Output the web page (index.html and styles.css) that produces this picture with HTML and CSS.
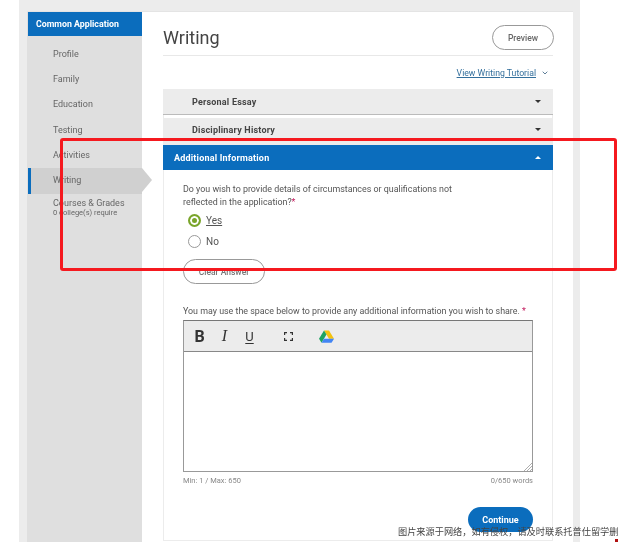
FILE: index.html
```html
<!DOCTYPE html>
<html lang="en">
<head>
<meta charset="utf-8">
<title>Writing</title>
<link rel="stylesheet" href="styles.css">
</head>
<body>
<div class="shell">
  <div class="page">
    <nav class="sidebar">
      <div class="side-head">Common Application</div>
      <ul class="side-list">
        <li class="side-item">Profile</li>
        <li class="side-item">Family</li>
        <li class="side-item">Education</li>
        <li class="side-item">Testing</li>
        <li class="side-item">Activities</li>
        <li class="side-item active">Writing</li>
        <li class="side-item multi">Courses &amp; Grades<small>0 college(s) require</small></li>
      </ul>
    </nav>
    <main class="main">
      <header class="title-row">
        <h1>Writing</h1>
        <button class="pill preview">Preview</button>
      </header>
      <div class="tutorial"><a>View Writing Tutorial</a><svg width="6" height="4" viewBox="0 0 6 4"><path d="M.7.7 3 3l2.3-2.3" fill="none" stroke="#5f7f99" stroke-width="1"/></svg></div>
      <section class="panel">
        <div class="acc first"><span>Personal Essay</span><i class="caret down"></i></div>
        <div class="acc second"><span>Disciplinary History</span><i class="caret down"></i></div>
        <div class="acc open"><span>Additional Information</span><i class="caret up"></i></div>
        <div class="panel-body">
          <p class="question">Do you wish to provide details of circumstances or qualifications not<br>reflected in the application?<b>*</b></p>
          <div class="radio-row yes"><span class="radio on"></span><span class="radio-label underlined">Yes</span></div>
          <div class="radio-row"><span class="radio"></span><span class="radio-label">No</span></div>
          <button class="pill clear">Clear Answer</button>
          <p class="prompt">You may use the space below to provide any additional information you wish to share. <b>*</b></p>
          <div class="editor">
            <div class="toolbar">
              <span class="tool bold">B</span>
              <span class="tool italic">I</span>
              <span class="tool under">U</span>
              <svg class="full" width="9" height="9" viewBox="0 0 9 9"><path d="M.6 3V.6H3M6 .6h2.400V3M8.400 6v2.400H6M3 8.400H.6V6" fill="none" stroke="#333" stroke-width="1.2"/></svg>
              <svg class="drive" width="15" height="13" viewBox="0 0 15 13"><path d="M5 .5h5l5 8.200h-5z" fill="#f4c20d"/><path d="M5 .5 0 8.800l2.500 4L7.500 4.600z" fill="#1ea362"/><path d="M5 8.700h10l-2.500 4H2.500z" fill="#4285f4"/></svg>
            </div>
            <div class="edit-area">
              <svg class="grip" width="8" height="8" viewBox="0 0 8 8"><path d="M8 0 0 8M8 3 3 8M8 6 6 8" stroke="#999" stroke-width=".8"/></svg>
            </div>
          </div>
          <div class="counts"><span>Min: 1 / Max: 650</span><span>0/650 words</span></div>
          <div class="actions"><button class="continue">Continue</button></div>
        </div>
      </section>
    </main>
  </div>
</div>
<div class="red-box"></div>
<div class="watermark">图片来源于网络，如有侵权，请及时联系托普仕留学删除</div>
<div class="corner-mark"></div>
</body>
</html>
```
FILE: styles.css
```css
* { box-sizing: border-box; }
html, body { margin: 0; height: 542px; overflow: hidden; background: #fff; }
body { font-family: Roboto, "Liberation Sans", sans-serif; color: #555; position: relative; filter: blur(.45px); }
.shell { width: 561px; height: 542px; margin-left: 19px; padding: 11px 7px 0 8px; background: #ececec; }
.page { display: flex; height: 531px; background: #fff; border-top: 1px solid #e4e4e4; }
.sidebar { width: 115px; flex: none; background: #dfdfdf; }
.side-head { height: 24px; margin-left: 1px; background: #0b6dbd; color: #fff; font-size: 8.800px; font-weight: 700; line-height: 24px; padding-left: 8px; }
.side-list { list-style: none; margin: 0; padding: 5.500px 0 0; }
.side-item { height: 25.400px; line-height: 25.400px; padding-left: 26px; font-size: 9px; color: #666; position: relative; }
.side-item.active { margin-left: 1px; background: #d0d0d0; border-left: 3px solid #0b6dbd; padding-left: 22px; }
.side-item.active::after { content: ""; position: absolute; left: 111px; top: 0; border-left: 10px solid #d0d0d0; border-top: 12.700px solid transparent; border-bottom: 12.700px solid transparent; }
.side-item.multi { line-height: 10px; padding-top: 4.500px; height: 30px; }
.side-item small { display: block; font-size: 7.500px; color: #666; }
.main { width: 390px; margin-left: 21px; flex: none; }
.title-row { display: flex; justify-content: space-between; align-items: center; height: 44px; padding-top: 8px; border-bottom: 1px solid #e8e8e8; }
h1 { margin: 0; font-size: 18px; font-weight: 400; color: #444; }
.pill { background: #fff; border: 1px solid #999; border-radius: 13px; font-family: inherit; color: #666; font-size: 8.500px; font-weight: 500; }
.preview { width: 62px; height: 25px; margin-right: -1px; }
.tutorial { height: 33px; display: flex; justify-content: flex-end; align-items: center; gap: 6px; padding-right: 5px; font-size: 8.700px; color: #336f9c; }
.tutorial a { text-decoration: underline; }
.panel { height: 452px; border: 1px solid #ececec; border-top: 0; }
.acc { display: flex; justify-content: space-between; align-items: center; padding: 0 12px 0 29px; background: #ececec; font-size: 9px; font-weight: 700; color: #444; letter-spacing: .2px; margin: 0 -1px; }
.acc.first { height: 26px; border-bottom: 1px solid #bbb; }
.acc.second { height: 27px; margin-top: 3px; padding-bottom: 4px; }
.acc.open { height: 25px; background: #0b6dbd; color: #fff; padding-left: 11px; }
.caret { width: 0; height: 0; border-left: 3px solid transparent; border-right: 3px solid transparent; }
.caret.down { border-top: 3px solid #333; }
.caret.up { border-bottom: 3px solid #fff; }
.panel-body { padding: 13px 19px 0; }
.question { margin: 0; font-size: 8.900px; line-height: 13px; color: #555; }
.question b, .prompt b { color: #c2185b; font-weight: 400; }
.radio-row { display: flex; align-items: center; gap: 5px; height: 21px; padding-left: 5px; font-size: 10px; color: #555; }
.radio-row.yes { margin-top: 1px; }
.radio { width: 13px; height: 13px; border-radius: 50%; border: 1px solid #999; background: #fff; flex: none; }
.radio.on { border: 2px solid #7aa52b; background: #7aa52b; box-shadow: inset 0 0 0 2px #fff; }
.underlined { text-decoration: underline; }
.clear { display: block; width: 82px; height: 25px; margin-top: 7px; color: #777; }
.prompt { margin: 21px 0 0; font-size: 8.900px; line-height: 12px; color: #555; white-space: nowrap; }
.editor { margin-top: 3px; width: 350px; height: 152px; border: 1px solid #999; border-top-color: #777; display: flex; flex-direction: column; }
.toolbar { height: 31px; background: #ececec; border-bottom: 1px solid #888; display: flex; align-items: center; padding-left: 3px; color: #333; }
.tool { width: 25px; text-align: center; }
.bold { font: 700 16px Roboto, sans-serif; }
.italic { font: italic 400 16px "Liberation Serif", serif; }
.under { font: 400 13px Roboto, sans-serif; text-decoration: underline; text-underline-offset: 2px; }
.full { margin-left: 22px; }
.drive { margin-left: 26px; }
.edit-area { flex: 1; position: relative; background: #fff; }
.grip { position: absolute; right: 0; bottom: 0; }
.counts { display: flex; justify-content: space-between; width: 350px; padding-top: 4px; font-size: 7.500px; color: #888; }
.actions { width: 350px; display: flex; justify-content: flex-end; margin-top: 22px; }
.continue { width: 65px; height: 25px; border: 0; border-radius: 13px; background: #0b6dbd; color: #fff; font: 700 9px Roboto, sans-serif; }
.red-box { position: absolute; left: 60px; top: 138px; width: 557px; height: 133px; border: 3px solid #f5191f; border-radius: 3px; }
.watermark { position: absolute; left: 398px; top: 525px; width: 220px; height: 13px; overflow: hidden; white-space: nowrap; font: 9.200px/13px "Noto Sans CJK SC", sans-serif; color: #444; }
.corner-mark { position: absolute; left: 615px; top: 539px; width: 3px; height: 3px; background: #b01010; }
```
